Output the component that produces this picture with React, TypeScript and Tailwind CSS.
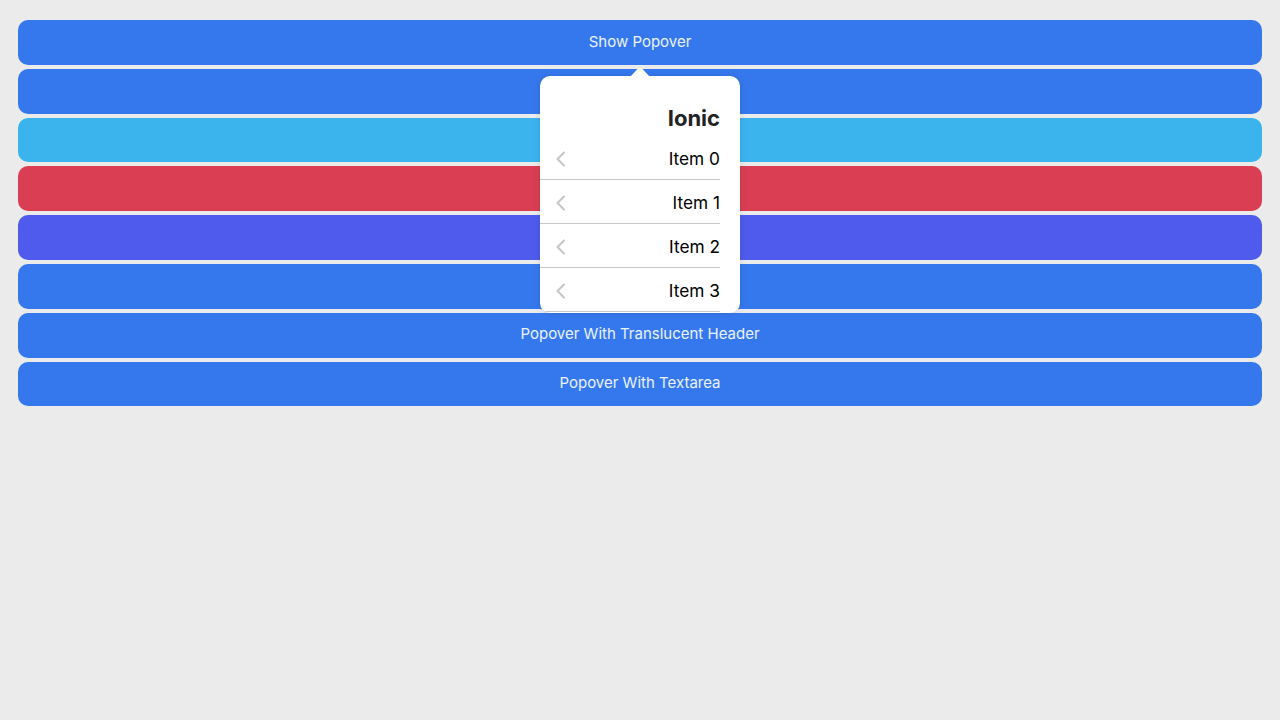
const buttons = [
  { label: "Show Popover", color: "bg-[#3578ed]" },
  { label: "Show Translucent Popover", color: "bg-[#3578ed]" },
  { label: "No Event Popover", color: "bg-[#3bb4ee]" },
  { label: "Custom Class Popover", color: "bg-[#d93e53]" },
  { label: "Popover With Header", color: "bg-[#4f5bec]" },
  { label: "Long List Popover", color: "bg-[#3578ed]" },
  { label: "Popover With Translucent Header", color: "bg-[#3578ed]" },
  { label: "Popover With Textarea", color: "bg-[#3578ed]" },
];

const items = ["Item 0", "Item 1", "Item 2", "Item 3"];

function Chevron() {
  return (
    <svg width="12" height="16" viewBox="0 0 12 16" className="ml-[15px] shrink-0">
      <polyline
        points="9,1.5 2.5,8 9,14.5"
        fill="none"
        stroke="#c5c5c7"
        strokeWidth="2"
        strokeLinecap="round"
        strokeLinejoin="round"
      />
    </svg>
  );
}

export default function App() {
  return (
    <div className="relative min-h-[720px] w-full bg-[#ebebeb] font-['Inter',sans-serif]">
      <div className="flex flex-col gap-1 px-[18px] pt-5">
        {buttons.map((b) => (
          <button
            key={b.label}
            className={`${b.color} h-[44.8px] w-full rounded-[10px] pb-[1px] text-[15px] text-white/90`}
          >
            {b.label}
          </button>
        ))}
      </div>

      <div className="absolute left-[540px] top-[67px] w-[200px]">
        <svg className="absolute left-[90px] top-0" width="20" height="10" viewBox="0 0 20 10">
          <path d="M0 10 L7.5 2 Q10 -0.5 12.5 2 L20 10 Z" fill="#ffffff" />
        </svg>
        <div
          dir="rtl"
          className="mt-[9px] h-[237px] overflow-hidden rounded-[10px] bg-white shadow-[0_0_6px_rgba(0,0,0,0.12)]"
        >
          <div className="flex h-[60px] items-end pb-[1px] pr-5">
            <h1 className="text-[22px] font-bold text-[#222]">Ionic</h1>
          </div>
          {items.map((it) => (
            <div
              key={it}
              className="mr-5 flex h-[44px] items-center justify-between border-b border-[#c8c7cc] pt-[3px]"
            >
              <span className="text-[17.3px] text-black">{it}</span>
              <Chevron />
            </div>
          ))}
        </div>
      </div>
    </div>
  );
}
